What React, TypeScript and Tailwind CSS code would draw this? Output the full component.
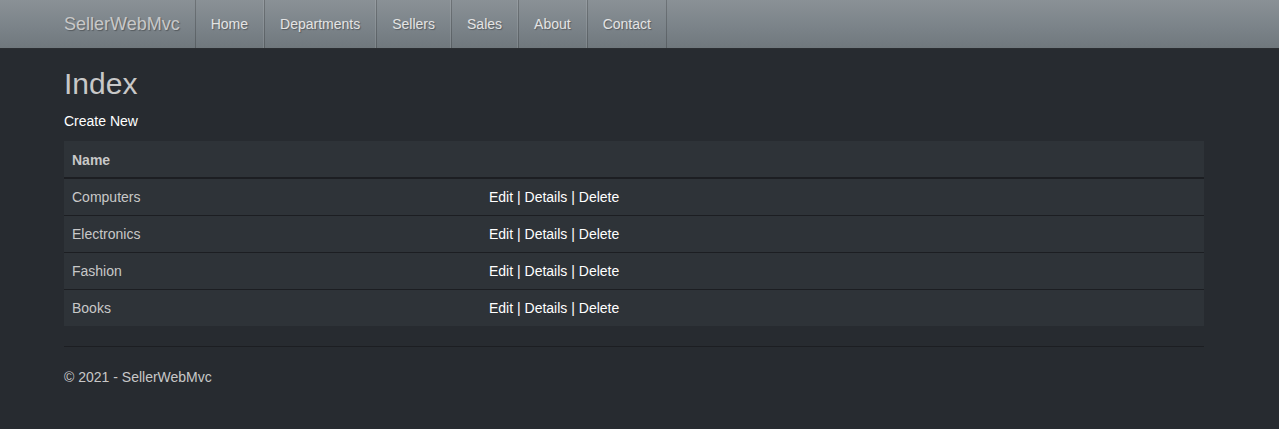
import React from 'react';

const navItems = ['Home', 'Departments', 'Sellers', 'Sales', 'About', 'Contact'];
const departments = ['Computers', 'Electronics', 'Fashion', 'Books'];

const App = () => {
  return (
    <div
      className="min-h-[429px] bg-[#272b30] text-[14px] leading-[20px] text-[#c8c8c8]"
      style={{ fontFamily: '"Liberation Sans", Arial, sans-serif' }}
    >
      {/* Top navbar */}
      <div className="h-[49px] border-b border-[#2b2e32] bg-[linear-gradient(#8a9196,#7a8288_60%,#70787d)]">
        <div className="flex h-full pl-[49px]">
          <div className="flex h-full items-center px-[15px] text-[18px] text-[#c8c8c8] [text-shadow:1px_1px_1px_rgba(0,0,0,0.3)]">
            SellerWebMvc
          </div>
          <ul className="flex h-full">
            {navItems.map((item) => (
              <li
                key={item}
                className="flex h-full items-center border-l border-r border-l-[rgba(0,0,0,0.2)] border-r-[rgba(255,255,255,0.1)] px-[15px] text-[#e4e4e4] [text-shadow:1px_1px_1px_rgba(0,0,0,0.3)] last:border-r-[rgba(0,0,0,0.2)]"
              >
                {item}
              </li>
            ))}
          </ul>
        </div>
      </div>

      <div className="w-[1140px] ml-[64px]">
        <h2 className="mt-[18px] mb-[11px] text-[30px] leading-[33px] text-[#c8c8c8]">Index</h2>
        <p className="mb-[10px]">
          <a className="text-white">Create New</a>
        </p>

        <table className="w-full border-collapse bg-[#2e3338]">
          <thead>
            <tr className="border-b-2 border-[#1c1e22]">
              <th className="h-[37px] w-[417px] px-[8px] pt-[1px] text-left font-bold">Name</th>
              <th className="px-[8px]"></th>
            </tr>
          </thead>
          <tbody>
            {departments.map((name, i) => (
              <tr key={name} className={i > 0 ? 'border-t border-[#1c1e22]' : ''}>
                <td className="h-[37px] px-[8px]">{name}</td>
                <td className="px-[8px] text-white">
                  <a>Edit</a> | <a>Details</a> | <a>Delete</a>
                </td>
              </tr>
            ))}
          </tbody>
        </table>

        <hr className="mt-[20px] border-t border-[#1c1e22]" />
        <footer className="mt-[20px]">
          <p>&copy; 2021 - SellerWebMvc</p>
        </footer>
      </div>
    </div>
  );
};

export default App;
